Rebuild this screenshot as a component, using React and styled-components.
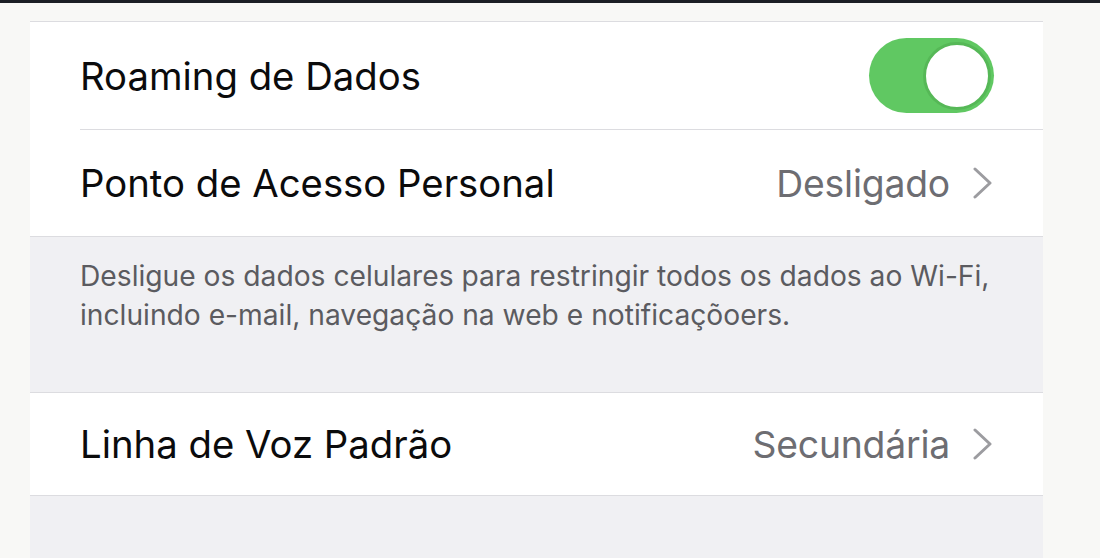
import React from "react";
import styled, { createGlobalStyle } from "styled-components";

const Global = createGlobalStyle`
  html, body { margin: 0; padding: 0; }
  body {
    background: #f8f8f6;
    font-family: Inter, "Noto Sans", "Liberation Sans", sans-serif;
    -webkit-font-smoothing: antialiased;
  }
`;

const Page = styled.div`
  width: 1100px;
  height: 558px;
  overflow: hidden;
  display: flex;
  flex-direction: column;
`;

const TopBar = styled.div`
  height: 3px;
  background: #1b1f25;
  flex-shrink: 0;
`;

const Stage = styled.div`
  flex: 1;
  padding: 18px 57px 0 30px;
  display: flex;
  flex-direction: column;
`;

const Panel = styled.div`
  flex: 1;
  background: #f0f0f3;
  display: flex;
  flex-direction: column;
`;

const Group = styled.div`
  background: #ffffff;
  border-top: 1px solid #dcdce0;
  border-bottom: 1px solid #dcdce0;
`;

const Row = styled.div`
  height: ${(p) => p.$h}px;
  margin-left: 50px;
  padding-right: 49px;
  display: flex;
  align-items: center;
  justify-content: space-between;
  border-bottom: ${(p) => (p.$sep ? "1px solid #dcdce0" : "none")};
`;

const Label = styled.span`
  font-size: 38.3px;
  color: #0b0b0c;
`;

const Value = styled.span`
  display: flex;
  align-items: center;
  gap: 22px;
  font-size: 37.3px;
  color: #6d6d72;
  letter-spacing: -0.2px;
`;

const Switch = styled.div`
  width: 125px;
  height: 75px;
  border-radius: 38px;
  background: #60c862;
  display: flex;
  align-items: center;
  justify-content: flex-end;
  padding: 2px;
  box-sizing: border-box;
`;

const Knob = styled.div`
  width: 68px;
  height: 68px;
  border-radius: 50%;
  background: #fff;
  border: 3px solid #56b857;
  box-sizing: border-box;
  margin-right: 1px;
`;

const Footer = styled.div`
  height: 155px;
  box-sizing: border-box;
  padding: 20px 0 0 50px;
  font-size: 28.2px;
  line-height: 39px;
  color: #5b5b60;
`;

const Chevron = () => (
  <svg width="22" height="32" viewBox="0 0 22 32">
    <path d="M3 2 L18 16 L3 30" fill="none" stroke="#9c9ca0" strokeWidth="3" strokeLinecap="round" strokeLinejoin="round" />
  </svg>
);

export default function App() {
  return (
    <Page>
      <Global />
      <TopBar />
      <Stage>
        <Panel>
          <Group>
            <Row $h={107} $sep>
              <Label>Roaming de Dados</Label>
              <Switch><Knob /></Switch>
            </Row>
            <Row $h={106}>
              <Label>Ponto de Acesso Personal</Label>
              <Value>Desligado<Chevron /></Value>
            </Row>
          </Group>
          <Footer>
            Desligue os dados celulares para restringir todos os dados ao Wi-Fi,
            <br />
            incluindo e-mail, navegação na web e notificaçõoers.
          </Footer>
          <Group>
            <Row $h={102}>
              <Label>Linha de Voz Padrão</Label>
              <Value>Secundária<Chevron /></Value>
            </Row>
          </Group>
        </Panel>
      </Stage>
    </Page>
  );
}
